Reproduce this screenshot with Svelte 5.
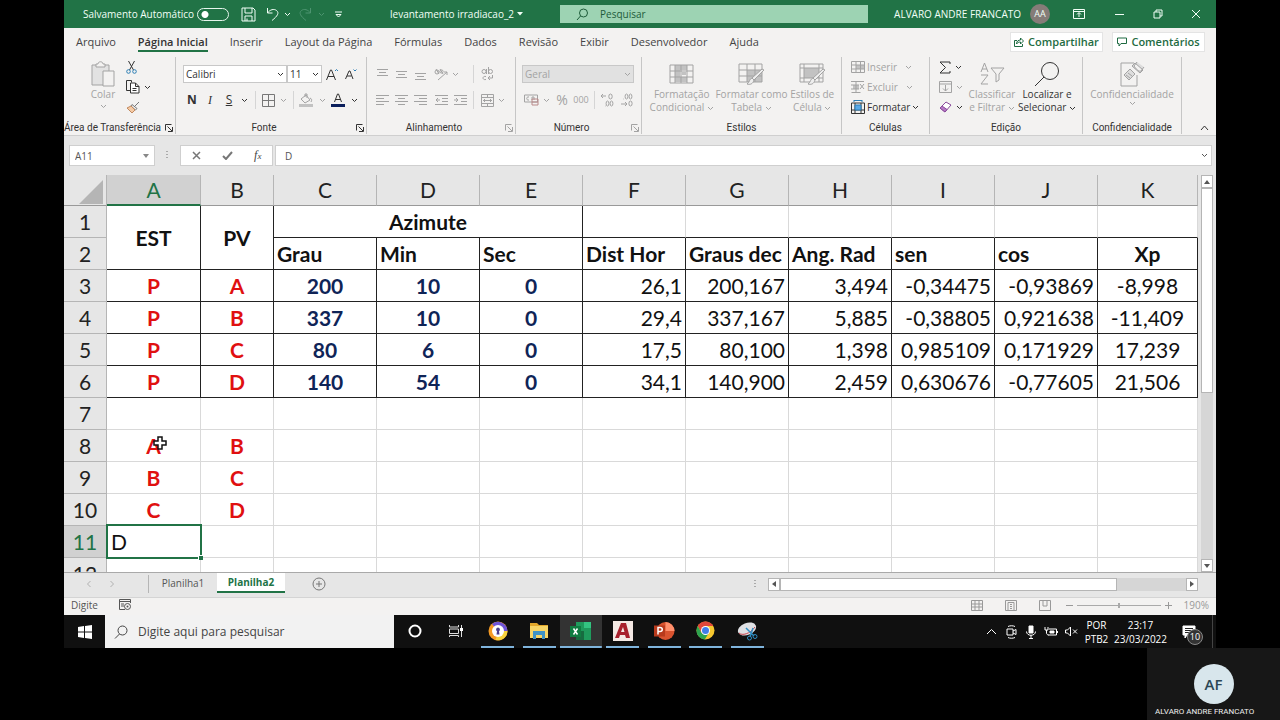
<script>
  const tabs = ['Arquivo', 'Página Inicial', 'Inserir', 'Layout da Página', 'Fórmulas', 'Dados', 'Revisão', 'Exibir', 'Desenvolvedor', 'Ajuda'];
  const columns = ['A', 'B', 'C', 'D', 'E', 'F', 'G', 'H', 'I', 'J', 'K'];
  const points = [
    ['P', 'A', '200', '10', '0', '26,1', '200,167', '3,494', '-0,34475', '-0,93869', '-8,998'],
    ['P', 'B', '337', '10', '0', '29,4', '337,167', '5,885', '-0,38805', '0,921638', '-11,409'],
    ['P', 'C', '80', '6', '0', '17,5', '80,100', '1,398', '0,985109', '0,171929', '17,239'],
    ['P', 'D', '140', '54', '0', '34,1', '140,900', '2,459', '0,630676', '-0,77605', '21,506']
  ];
  const lower = [
    [7, '', ''],
    [8, 'A', 'B'],
    [9, 'B', 'C'],
    [10, 'C', 'D']
  ];
  const rest = Array(9).fill('');
  const kind = (i) => (i < 2 ? 'red' : i < 5 ? 'navy' : i < 10 ? 'num' : 'mid');
  let entry = $state('D');
  let zoom = $state(50);
</script>

{#snippet caret()}
  <svg class="caret" width="7" height="5" viewBox="0 0 7 5" aria-hidden="true"><path d="M1 1l2.5 2.5L6 1" /></svg>
{/snippet}
{#snippet launcher()}
  <button class="launch" aria-label="Mais opções"><svg width="8" height="8" viewBox="0 0 8 8"><path d="M.5 6.500V.5h6M2.500 2.500l4.500 4.500M7.500 3v4.500H3" /></svg></button>
{/snippet}

<div class="page">
  <div class="window">
    <header class="title">
      <div class="quick">
        <label class="auto">Salvamento Automático <input type="checkbox" class="toggle" /></label>
        <button aria-label="Salvar"><svg width="15" height="15" viewBox="0 0 15 15"><path d="M1 1h11l2 2v11H1zM4 1v5h7V1M4 14V9h7v5M6 11.500v2.500" /></svg></button>
        <button aria-label="Desfazer"><svg width="14" height="14" viewBox="0 0 14 14"><path d="M1.500 1v5h5M1.500 6C4 2.500 8 1.500 10.500 3.500c3 2.500 1 5.500-4.500 10" /></svg></button>
        <button aria-label="Opções de desfazer">{@render caret()}</button>
        <button class="faint" aria-label="Refazer"><svg width="14" height="14" viewBox="0 0 14 14"><path d="M12.500 1v5h-5M12.500 6C10 2.500 6 1.500 3.500 3.500c-3 2.500-1 5.500 4.500 10" /></svg></button>
        <button class="faint" aria-label="Opções de refazer">{@render caret()}</button>
        <button aria-label="Personalizar"><svg width="7" height="7" viewBox="0 0 7 7"><path d="M0 1h7M1 3.500l2.500 2.500L6 3.500z" /></svg></button>
      </div>
      <button class="doc">levantamento irradiacao_2 <svg width="6" height="4" viewBox="0 0 6 4"><path class="solid" d="M0 0h6L3 3.500z" /></svg></button>
      <label class="find">
        <svg width="13" height="13" viewBox="0 0 13 13"><circle cx="7.500" cy="5" r="4" /><path d="M4.500 8L1 12" /></svg>
        <input placeholder="Pesquisar" aria-label="Pesquisar" />
      </label>
      <div class="account">
        <span>ALVARO ANDRE FRANCATO</span><span class="initials">AA</span>
        <button aria-label="Opções da faixa"><svg width="12" height="10" viewBox="0 0 12 10"><path d="M.5.5h11v9H.5zM.5 2.500h11M6 8V4M4 5.500l2-2 2 2" /></svg></button>
        <button aria-label="Minimizar"><svg width="9" height="9" viewBox="0 0 9 9"><path d="M0 4.500h9" /></svg></button>
        <button aria-label="Restaurar"><svg width="10" height="10" viewBox="0 0 10 10"><path d="M1 3h6v6H1zM3 3V1h6v6H7" /></svg></button>
        <button aria-label="Fechar"><svg width="10" height="10" viewBox="0 0 10 10"><path d="M1 1l8 8M9 1L1 9" /></svg></button>
      </div>
    </header>

    <nav class="tabs">
      {#each tabs as tab, i}<button class:current={i === 1}>{tab}</button>{/each}
      <div class="share">
        <button><svg width="10" height="10" viewBox="0 0 10 10"><path d="M3 3.500H.5v6h8V7M2.500 7c0-3 2-4 4-4V1l3 3-3 3V5c-2 0-3 .5-4 2z" /></svg>Compartilhar</button>
        <button><svg width="10" height="10" viewBox="0 0 10 10"><path d="M.5 1h9v5.500H4L2 9V6.500H.5z" /></svg>Comentários</button>
      </div>
    </nav>

    <section class="ribbon">
      <div class="group">
        <div class="body clip">
          <button class="big off">
            <svg width="24" height="26" viewBox="0 0 24 26"><path fill="#e2e2e2" d="M1 4h17v20H1z" /><path fill="#f3f2f1" d="M5 6V3h2c0-3 5-3 5 0h2v3zM12 10h11v15H12z" /></svg>
            <span>Colar</span>{@render caret()}
          </button>
          <div class="stack">
            <button aria-label="Recortar"><svg width="11" height="13" viewBox="0 0 11 13"><path d="M2.500 0l5 9M8.500 0l-5 9" /><g stroke="#2d7fb5"><circle cx="2.500" cy="10.500" r="1.800" /><circle cx="8.500" cy="10.500" r="1.800" /></g></svg></button>
            <button aria-label="Copiar"><svg width="14" height="14" viewBox="0 0 14 14"><path d="M4 10.500H.5v-10h5v2" /><path fill="#fff" d="M4.500 3h5L13 6.500V13H4.500zM9.500 3v3.500H13M6.500 8.500h4M6.500 10.500h4" /></svg>{@render caret()}</button>
            <button aria-label="Pincel de Formatação"><svg width="14" height="13" viewBox="0 0 14 13"><path stroke="#777" d="M13 1L9 5M6 3.500l5 4-1.500 1.500L5 5z" /><path fill="#f4cba6" stroke="#c28a60" d="M5 5L1 7l5 5 3-3z" /></svg></button>
          </div>
        </div>
        <footer class="has-launch">Área de Transferência{@render launcher()}</footer>
      </div>

      <div class="group">
        <div class="body two font-body">
          <div class="fonts">
            <span class="sel"><select aria-label="Fonte"><option>Calibri</option></select>{@render caret()}</span>
            <span class="sel"><select aria-label="Tamanho da fonte"><option>11</option></select>{@render caret()}</span>
            <button aria-label="Aumentar fonte"><svg width="13" height="13" viewBox="0 0 13 13"><path d="M.5 12L4.500 2h1l4 10M2 8.500h6" /><path stroke="#2d7fb5" d="M9 3l1.500-1.500L12 3" /></svg></button>
            <button aria-label="Diminuir fonte"><svg width="12" height="12" viewBox="0 0 12 12"><path d="M.5 11L4 3h1l3 8M2 8h4.500" /><path stroke="#2d7fb5" d="M8.500 1.500L10 3l1.500-1.500" /></svg></button>
          </div>
          <div class="style-row">
            <button class="letter"><b>N</b></button><button class="letter serif"><i>I</i></button><button class="letter"><u>S</u></button><button aria-label="Opções de sublinhado">{@render caret()}</button><hr />
            <button aria-label="Bordas"><svg width="13" height="13" viewBox="0 0 13 13"><path stroke="#777" d="M.5.5h12v12H.5zM6.500.5v12M.5 6.500h12" /></svg></button><button class="off" aria-label="Opções de bordas">{@render caret()}</button><hr />
            <button class="off" aria-label="Preenchimento"><svg width="14" height="14" viewBox="0 0 14 14"><path d="M2 6l5-4 4 5-5 3zM6 4V1h2v4M11 5c2 1 2 2 1 4" /><path class="block" d="M0 11h14v3H0z" /></svg></button><button class="off" aria-label="Opções de preenchimento">{@render caret()}</button>
            <button aria-label="Cor da fonte"><svg width="14" height="14" viewBox="0 0 14 14"><path d="M3.500 9L6.500 1h1l3 8M4.500 6.500h5" /><path fill="#0b1f5c" stroke="none" d="M0 11h14v3H0z" /></svg></button><button aria-label="Opções de cor">{@render caret()}</button>
          </div>
        </div>
        <footer class="has-launch">Fonte{@render launcher()}</footer>
      </div>

      <div class="group">
        <div class="body two off">
          <div class="align-row">
            <button aria-label="Alinhar em cima"><svg width="13" height="14" viewBox="0 0 13 14"><path d="M1 2.500h11M3 5.500h7M1 8.500h11" /></svg></button>
            <button aria-label="Alinhar no meio"><svg width="13" height="14" viewBox="0 0 13 14"><path d="M1 4.500h11M3 7.500h7M1 10.500h11" /></svg></button>
            <button aria-label="Alinhar embaixo"><svg width="13" height="14" viewBox="0 0 13 14"><path d="M1 6.500h11M3 9.500h7M1 12.500h11" /></svg></button>
            <button aria-label="Orientação"><svg width="14" height="13" viewBox="0 0 14 13"><path d="M4 12L13 4M10 4h3v3" /><circle cx="3" cy="4" r="2" /><path d="M5 6L2 1M6 1l3 5" /><circle cx="7.500" cy="3.500" r="1.600" /></svg></button>
            <button class="near" aria-label="Opções de orientação">{@render caret()}</button><hr />
            <button aria-label="Quebrar texto"><svg width="13" height="14" viewBox="0 0 13 14"><circle cx="3" cy="4.500" r="2" /><path d="M5.500 2v5M7.500 0v7M5 9.500c-4-1-4 4 0 3M11.500 8v3H7M9 9l-2 2 2 2" /><circle cx="9.500" cy="4.500" r="2" /></svg></button>
          </div>
          <div class="align-row">
            <button aria-label="À esquerda"><svg width="13" height="13" viewBox="0 0 13 13"><path d="M0 1.500h13M0 4.500h8M0 7.500h13M0 10.500h8" /></svg></button>
            <button aria-label="Centralizar"><svg width="13" height="13" viewBox="0 0 13 13"><path d="M0 1.500h13M3 4.500h7M0 7.500h13M3 10.500h7" /></svg></button>
            <button aria-label="À direita"><svg width="13" height="13" viewBox="0 0 13 13"><path d="M0 1.500h13M5 4.500h8M0 7.500h13M5 10.500h8" /></svg></button>
            <button aria-label="Diminuir recuo"><svg width="13" height="13" viewBox="0 0 13 13"><path d="M0 1.500h13M7 4.500h6M7 7.500h6M0 10.500h13M5 6H1M3 4L1 6l2 2" /></svg></button>
            <button aria-label="Aumentar recuo"><svg width="13" height="13" viewBox="0 0 13 13"><path d="M0 1.500h13M7 4.500h6M7 7.500h6M0 10.500h13M0 6h4M2 4l2 2-2 2" /></svg></button><hr />
            <button aria-label="Mesclar"><svg width="13" height="13" viewBox="0 0 13 13"><path d="M.5.5h12v12H.5zM.5 3.500h12M.5 9.500h12M6.500 0v3.500M6.500 9.500V13M2 6.500h9M4 5L2.500 6.500 4 8M9 5l1.500 1.500L9 8" /></svg></button>
            <button aria-label="Opções de mesclagem">{@render caret()}</button>
          </div>
        </div>
        <footer class="has-launch">Alinhamento<span class="off">{@render launcher()}</span></footer>
      </div>

      <div class="group">
        <div class="body two off">
          <div class="format"><span class="sel"><select aria-label="Formato de número" disabled><option>Geral</option></select>{@render caret()}</span></div>
          <div class="number-row">
            <button aria-label="Moeda"><svg width="15" height="12" viewBox="0 0 15 12"><path d="M.5 1h13v7H.5z" /><path d="M5 3c-3-1-3 4 0 3M8 6V3h2v3" /><path stroke="#b98a8a" d="M8 5h6v6H8zM8 8h6" /></svg></button>
            <button aria-label="Opções de moeda">{@render caret()}</button>
            <button class="pct">%</button><button class="thousand">000</button><hr />
            <button aria-label="Aumentar casas"><svg width="14" height="14" viewBox="0 0 14 14"><path d="M1 3h5M3 1L1 3l2 2M5 13h.5" /><ellipse cx="10.500" cy="3.500" rx="1.700" ry="2.500" /><ellipse cx="7.500" cy="10.500" rx="1.400" ry="2.500" /><ellipse cx="11.500" cy="10.500" rx="1.400" ry="2.500" /></svg></button>
            <button aria-label="Diminuir casas"><svg width="14" height="14" viewBox="0 0 14 14"><path d="M1 11h6M5 9l2 2-2 2M3 6h.5" /><ellipse cx="6.500" cy="3.500" rx="1.400" ry="2.500" /><ellipse cx="10.500" cy="3.500" rx="1.400" ry="2.500" /><ellipse cx="10.500" cy="10.500" rx="1.600" ry="2.500" /></svg></button>
          </div>
        </div>
        <footer class="has-launch">Número<span class="off">{@render launcher()}</span></footer>
      </div>

      <div class="group">
        <div class="body styles off">
          <button class="big"><svg width="25" height="22" viewBox="0 0 25 22"><path class="block" d="M6 2h12v5H6zM6 7h5v7H6zM6 14h12v5H6zM13 9h4v3h-4z" /><path d="M1 2h23v18H1zM1 8h23M1 14h23M6 2v18M12 2v18M18 2v18" /></svg><span>Formatação<br />Condicional {@render caret()}</span></button>
          <button class="big"><svg width="27" height="24" viewBox="0 0 27 24"><path class="block" d="M9 8h15v12H9z" /><path d="M1 2h23v18H1zM1 8h23M1 14h23M9 2v18M17 2v18" /><path fill="#eee" d="M26 8L16 18l-2-2L24 7zM16 18c-1 4-4 5-7 4 3-2 2-5 5-6z" /></svg><span>Formatar como<br />Tabela {@render caret()}</span></button>
          <button class="big"><svg width="27" height="24" viewBox="0 0 27 24"><path class="block" d="M5 6h15v10H5z" /><path d="M1 2h23v18H1zM1 6h23M1 16h23M5 2v18M20 2v18" /><path fill="#eee" d="M26 8L16 18l-2-2L24 7zM16 18c-1 4-4 5-7 4 3-2 2-5 5-6z" /></svg><span>Estilos de<br />Célula {@render caret()}</span></button>
        </div>
        <footer>Estilos</footer>
      </div>

      <div class="group">
        <div class="body cells">
          <button class="off"><svg width="14" height="12" viewBox="0 0 14 12"><path class="block" d="M5 4h8v4H5z" /><path d="M.5.5h13v11H.5zM5 0v12M9.500 0v12M0 4h14M0 8h14" /></svg>Inserir <i></i>{@render caret()}</button>
          <button class="off"><svg width="14" height="12" viewBox="0 0 14 12"><path class="block" d="M2 4h6v4H2z" /><path d="M.5 11.500h9M0 .5h13M0 4h8M0 8h8M5 0v12M9 3l4 5M13 3L9 8" /></svg>Excluir <i></i>{@render caret()}</button>
          <button><svg width="14" height="14" viewBox="0 0 14 14"><path d="M.5 3h13v10.500H.5zM4 3v10.500M10 3v10.500M0 10h14" /><path fill="#58a9e8" stroke="#2d7fb5" d="M4 5h6v5H4zM3 .5h8M3 0v2M11 0v2" /></svg>Formatar{@render caret()}</button>
        </div>
        <footer>Células</footer>
      </div>

      <div class="group">
        <div class="body edit">
          <div class="stack">
            <button aria-label="AutoSoma"><svg width="12" height="13" viewBox="0 0 12 13"><path d="M11 3V1H1l5.500 5.500L1 12h10v-2" /></svg>{@render caret()}</button>
            <button class="off" aria-label="Preencher"><svg width="13" height="12" viewBox="0 0 13 12"><path d="M.5.5h12v11H.5zM.5 3h12M6.500 4v6M4 7.500L6.500 10 9 7.500" /></svg>{@render caret()}</button>
            <button aria-label="Limpar"><svg width="13" height="12" viewBox="0 0 13 12"><path fill="#fff" stroke="#8a4a9c" d="M1 7l6-6 5 3-6 7z" /><path fill="#b579c4" stroke="#8a4a9c" d="M1 7l2-2 5 3.500L6 11z" /></svg>{@render caret()}</button>
          </div>
          <button class="big off"><svg width="25" height="26" viewBox="0 0 25 26"><path d="M1 11L4.500 2 8 11M2 8h5M1 14h7l-7 9h7M11 7h13l-5 6v6l-3 2v-8z" /></svg><span>Classificar<br />e Filtrar {@render caret()}</span></button>
          <button class="big"><svg width="26" height="26" viewBox="0 0 26 26"><circle cx="16" cy="10" r="8.500" /><path d="M10 16l-9 9" /></svg><span>Localizar e<br />Selecionar {@render caret()}</span></button>
        </div>
        <footer>Edição</footer>
      </div>

      <div class="group">
        <div class="body conf off">
          <button class="big"><svg width="25" height="26" viewBox="0 0 25 26"><path d="M17 14v11H1V2h13" /><path fill="#ddd" d="M4 14l6-6 5 5-6 6zM6 14l4 3M8 12l4 3M12 5l3-3 8 7-3 3zM17 1l-3 4c2 3 5 6 7 5l3-4" /></svg><span>Confidencialidade</span>{@render caret()}</button>
        </div>
        <footer>Confidencialidade</footer>
      </div>
      <button class="fold" aria-label="Recolher faixa"><svg width="9" height="6" viewBox="0 0 9 6"><path d="M1 5l3.500-4L8 5" /></svg></button>
    </section>

    <section class="formula">
      <div class="namebox"><input value="A11" aria-label="Caixa de nome" /><svg width="6" height="4" viewBox="0 0 6 4"><path class="solid" d="M0 0h6L3 4z" /></svg></div>
      <span class="dots"></span>
      <div class="fx">
        <button aria-label="Cancelar"><svg width="9" height="9" viewBox="0 0 9 9"><path stroke-width="1.500" d="M1 1l7 7M8 1L1 8" /></svg></button>
        <button aria-label="Inserir valor"><svg width="11" height="9" viewBox="0 0 11 9"><path stroke-width="2" d="M1 5l3 3 6-7" /></svg></button>
        <button class="func"><i>f<small>x</small></i></button>
      </div>
      <div class="bar"><input bind:value={entry} aria-label="Barra de fórmulas" />{@render caret()}</div>
    </section>

    <main class="grid">
      <div class="cellsview">
        <table>
          <colgroup><col class="w-head" /><col class="w-a" /><col class="w-b" />{#each Array(8) as _}<col class="w-c" />{/each}<col /></colgroup>
          <thead>
            <tr><th class="corner"><svg width="25" height="25" viewBox="0 0 25 25" aria-hidden="true"><path d="M24 0v24H0z" /></svg></th>{#each columns as c, i}<th class:picked={i === 0}>{c}</th>{/each}</tr>
          </thead>
          <tbody>
            <tr class="ink"><th>1</th><td rowspan="2" class="mid bold">EST</td><td rowspan="2" class="mid bold">PV</td><td colspan="3" class="mid bold">Azimute</td>{#each Array(6) as _}<td class="open"></td>{/each}</tr>
            <tr class="ink bold"><th>2</th><td>Grau</td><td>Min</td><td>Sec</td><td>Dist Hor</td><td>Graus dec</td><td>Ang. Rad</td><td>sen</td><td>cos</td><td class="mid">Xp</td></tr>
            {#each points as row, r}
              <tr class="ink"><th>{r + 3}</th>{#each row as v, i}<td class={kind(i)}>{v}</td>{/each}</tr>
            {/each}
            {#each lower as [n, a, b]}
              <tr><th>{n}</th><td class="red">{a}{#if n === 8}<svg class="pointer" width="14" height="14" viewBox="0 0 14 14" aria-hidden="true"><path d="M5 1h4v4h4v4H9v4H5V9H1V5h4z" /></svg>{/if}</td><td class="red">{b}</td>{#each rest as _}<td></td>{/each}</tr>
            {/each}
            <tr><th class="picked">11</th><td class="active"><div class="editor"><input bind:value={entry} aria-label="Célula A11" /><span></span></div></td><td></td>{#each rest as _}<td></td>{/each}</tr>
            <tr><th>12</th><td></td><td></td>{#each rest as _}<td></td>{/each}</tr>
          </tbody>
        </table>
      </div>
      <div class="vscroll">
        <button aria-label="Rolar para cima"><svg width="6" height="4" viewBox="0 0 6 4"><path class="solid" d="M0 4h6L3 0z" /></svg></button>
        <span class="thumb"></span><span class="track"></span>
        <button aria-label="Rolar para baixo"><svg width="6" height="4" viewBox="0 0 6 4"><path class="solid" d="M0 0h6L3 4z" /></svg></button>
      </div>
    </main>

    <nav class="sheets">
      <div class="arrows"><svg width="4" height="6" viewBox="0 0 4 6"><path d="M3.500 0L.5 3l3 3" /></svg><svg width="4" height="6" viewBox="0 0 4 6"><path d="M.5 0l3 3-3 3" /></svg></div>
      <button class="sheet">Planilha1</button><button class="sheet on">Planilha2</button>
      <button class="add" aria-label="Nova planilha"><svg width="14" height="14" viewBox="0 0 14 14"><circle cx="7" cy="7" r="6" /><path d="M7 4v6M4 7h6" /></svg></button>
      <span class="dots"></span>
      <div class="hscroll">
        <button aria-label="Rolar para a esquerda"><svg width="4" height="6" viewBox="0 0 4 6"><path class="solid" d="M4 0v6L0 3z" /></svg></button>
        <span class="thumb"></span><span class="track"></span>
        <button aria-label="Rolar para a direita"><svg width="4" height="6" viewBox="0 0 4 6"><path class="solid" d="M0 0v6l4-3z" /></svg></button>
      </div>
    </nav>

    <footer class="status">
      <span>Digite</span>
      <button aria-label="Gravar macro"><svg width="13" height="12" viewBox="0 0 13 12"><path d="M6 10.500H.5V.5h11V4M.5 2.500h11M2 5h3M2 7h3" /><circle cx="8.500" cy="7.500" r="3" /><circle class="solid" cx="8.500" cy="7.500" r="1" /></svg></button>
      <div class="views">
        <button aria-label="Normal"><svg width="12" height="11" viewBox="0 0 12 11"><path d="M.5.5h11v10H.5zM4 0v11M8 0v11M0 4h12M0 7h12" /></svg></button>
        <button aria-label="Layout da página"><svg width="12" height="11" viewBox="0 0 12 11"><path d="M.5.5h11v10H.5zM3 2.500h6v8H3zM5 4.500h2M5 6.500h2M5 8.500h2" /></svg></button>
        <button aria-label="Quebra de página"><svg width="12" height="11" viewBox="0 0 12 11"><path d="M.5.5h11v10H.5zM4 0v6h4V0" /></svg></button>
      </div>
      <div class="zoom">
        <button aria-label="Menos zoom"><svg width="7" height="7" viewBox="0 0 7 7"><path d="M0 3.500h7" /></svg></button>
        <input type="range" bind:value={zoom} aria-label="Zoom" />
        <button aria-label="Mais zoom"><svg width="7" height="7" viewBox="0 0 7 7"><path d="M0 3.500h7M3.500 0v7" /></svg></button>
        <span>190%</span>
      </div>
    </footer>

    <section class="taskbar">
      <button class="start" aria-label="Iniciar"><svg width="14" height="14" viewBox="0 0 14 14"><path d="M0 2l6-1v5.500H0zM7 1l7-1v6.500H7zM0 7.500h6V13l-6-1zM7 7.500h7V14l-7-1z" /></svg></button>
      <label class="tasksearch"><svg width="14" height="14" viewBox="0 0 14 14"><circle cx="8.500" cy="5.500" r="4.500" /><path d="M5.500 9L1 13.500" /></svg><input placeholder="Digite aqui para pesquisar" aria-label="Pesquisar no computador" /></label>
      <div class="apps">
        <button aria-label="Cortana"><svg width="14" height="14" viewBox="0 0 14 14"><circle cx="7" cy="7" r="5.500" fill="none" stroke="#fff" stroke-width="2" /></svg></button>
        <button aria-label="Visão de tarefas"><svg width="14" height="14" viewBox="0 0 14 14"><path fill="none" stroke="#ddd" d="M.5 1v2h9V1M.5 5h9v4.500h-9zM.5 13v-1.500h9V13M12.500 1v12" /><path fill="#fff" d="M11 4h3v3h-3z" /></svg></button>
        <button class="run" aria-label="Navegador seguro"><svg width="20" height="20" viewBox="0 0 20 20"><circle cx="10" cy="10" r="9.500" fill="#f59a23" /><path fill="#6f54d8" d="M4 3a9.500 9.500 0 0 1 15.500 7H10z" /><path fill="#f7d23c" d="M19.500 10a9.500 9.500 0 0 1-12 9l3-9z" /><circle cx="10" cy="10" r="6" fill="#fff" /><path fill="#4a3d8c" d="M10 6.500a2 2 0 0 1 1 3.700l.5 3.300h-3l.5-3.300a2 2 0 0 1 1-3.700z" /></svg></button>
        <button class="run" aria-label="Explorador"><svg width="20" height="18" viewBox="0 0 20 18"><path fill="#e2a72a" d="M1 1h7l2 2h9v4H1z" /><path fill="#f7d566" d="M1 4h18v12H1z" /><path fill="#3f93c6" d="M4 9h12v8h-3v-4H7v4H4z" /></svg></button>
        <button class="run focus" aria-label="Excel"><svg width="21" height="18" viewBox="0 0 21 18"><path fill="#1f9a5c" d="M6 0h15v18H6z" /><path fill="#33c481" d="M14 0h7v6h-7z" /><path fill="#176b40" d="M6 9h8v9H6z" /><path fill="#107c41" d="M0 4h11v11H0z" /><path stroke="#fff" stroke-width="1.500" d="M3.500 6.500l4 6M7.500 6.500l-4 6" /></svg></button>
        <button class="run" aria-label="AutoCAD"><svg width="20" height="20" viewBox="0 0 20 20"><path fill="#f4e9e4" d="M0 0h20v20H0z" /><path fill="#a8202c" d="M2 17L8 2h5l4 15h-4l-1-3H7l-1 3zM8 11h3.500L10 6z" /></svg></button>
        <button class="run" aria-label="PowerPoint"><svg width="21" height="20" viewBox="0 0 21 20"><circle cx="11.500" cy="10" r="9" fill="#d9532f" /><path fill="#ff8f6b" d="M11.500 1a9 9 0 0 1 9 9h-9z" /><path fill="#b83a1c" d="M0 4.500h11v11H0z" /><path fill="none" stroke="#fff" stroke-width="1.500" d="M4 13.500v-7h2c3 0 3 4 0 4H4" /></svg></button>
        <button class="run" aria-label="Chrome"><svg width="19" height="19" viewBox="0 0 19 19"><circle cx="9.500" cy="9.500" r="9" fill="#f7c72e" /><path fill="#e0463a" d="M1.700 5a9 9 0 0 1 15.600 0H9.500L5.600 12z" /><path fill="#2da44f" d="M1.700 5a9 9 0 0 0 7 13.500l4.500-7-7.600.5z" /><circle cx="9.500" cy="9.500" r="4.500" fill="#fff" /><circle cx="9.500" cy="9.500" r="3.500" fill="#3f7de8" /></svg></button>
        <button class="run" aria-label="Captura"><svg width="21" height="20" viewBox="0 0 21 20"><ellipse cx="10" cy="8" rx="9.500" ry="6" fill="#dfe0e4" transform="rotate(-22 10 8)" /><path stroke="#c8414a" fill="none" d="M2 12c3 3 11 1 16-6" /><path stroke="#2f8ec4" stroke-width="1.500" fill="none" d="M9 7l8 8M16 7l-3 9" /><circle cx="12.500" cy="17" r="2" fill="none" stroke="#2f8ec4" /><circle cx="18" cy="15.500" r="2" fill="none" stroke="#2f8ec4" /></svg></button>
      </div>
      <div class="tray">
        <button aria-label="Ícones ocultos"><svg width="11" height="7" viewBox="0 0 11 7"><path d="M1 6l4.500-4.500L10 6" /></svg></button>
        <button aria-label="Reunião"><svg width="11" height="14" viewBox="0 0 11 14"><path d="M1 4h6v6H1zM7 6l3-1.500v5L7 8M2 1.500c2-1 5-1 7 0M2 12.500c2 1 5 1 7 0" /></svg></button>
        <button aria-label="Microfone"><svg width="10" height="14" viewBox="0 0 10 14"><path fill="#fff" d="M3 1h4v7H3z" /><path d="M.5 6.500c0 5 9 5 9 0M5 10v3M3 13.500h4" /></svg></button>
        <button aria-label="Bateria"><svg width="14" height="11" viewBox="0 0 14 11"><path d="M5 3h7.500v6H4M13.500 5v2M1 1v3h3V1M2.500 4v3c0 1 1 2 2 2" /><path fill="#fff" d="M6 5h4v2H6z" /></svg></button>
        <button aria-label="Som"><svg width="13" height="11" viewBox="0 0 13 11"><path d="M.5 4h2l3-3v9l-3-3h-2zM8 3.500l4 4M12 3.500l-4 4" /></svg></button>
        <button class="lang">POR<br />PTB2</button>
        <button class="clock">23:17<br />23/03/2022</button>
        <button class="notes" aria-label="Notificações"><svg width="15" height="14" viewBox="0 0 15 14"><path fill="#fff" d="M1 1h12v9H5l-2 3v-3H1z" /><path stroke="#222" d="M3 3.500h8M3 5.500h8M3 7.500h6" /></svg><span>10</span></button>
      </div>
    </section>
  </div>

  <aside class="call">
    <div class="person"><span class="face">AF</span><span class="who">ALVARO ANDRE FRANCATO</span></div>
  </aside>
</div>

<style>
  :global(body) { background: #000; }
  :global(*) { box-sizing: border-box; }
  .page { min-height: 100vh; display: flex; flex-direction: column; font: 10px/12px "Open Sans", sans-serif; color: #333; }
  .window { flex: 1; display: flex; flex-direction: column; margin: 0 64px; background: #e6e6e6; }
  button { display: flex; align-items: center; justify-content: center; padding: 0; border: 0; background: none; color: inherit; font: inherit; white-space: nowrap; }
  input, select { min-width: 0; padding: 0; border: 0; border-radius: 0; outline: 0; background: none; color: inherit; font: inherit; }
  hr { width: 1px; height: 18px; margin: 0; border: 0; background: #d5d5d5; }
  svg { flex: none; fill: none; stroke: currentColor; }
  .solid { fill: currentColor; stroke: none; }
  .block { fill: #c2c2c2; stroke: none; }
  .off { color: #a3a3a3; }

  .title { display: flex; align-items: center; height: 28px; background: #217346; color: #f2fff7; }
  .quick { display: grid; grid-template-columns: 169px 30px 20px 9px 26px 6px 28px; align-items: center; justify-items: center; width: 326px; }
  .quick .faint { color: #4d9470; }
  .auto { display: flex; align-items: center; justify-content: space-between; justify-self: stretch; padding: 0 4px 0 19px; white-space: nowrap; }
  .toggle { appearance: none; width: 32px; height: 13px; margin: 0; border: 1px solid #e6f5ec; border-radius: 7px; background: radial-gradient(circle at 7px 50%, #fff 3px, transparent 4px); }
  .doc { width: 170px; gap: 3px; justify-content: flex-start; }
  .find { flex: 1; display: flex; align-items: center; gap: 11px; height: 18px; padding-left: 16px; background: #9dd3b3; color: #1d5c3a; }
  .find input { flex: 1; }
  input::placeholder { color: inherit; opacity: 1; }
  .account { display: grid; grid-template-columns: 153px 38px 40px 40px 37px 40px; align-items: center; justify-items: center; width: 348px; }
  .account span:first-child { justify-self: end; }
  .initials { width: 20px; border-radius: 50%; background: #857c78; text-align: center; font-size: 9px; line-height: 20px; }

  .tabs { display: flex; align-items: center; gap: 22px; height: 28px; padding: 0 11px 0 12px; background: #f3f2f1; color: #444; font-size: 11px; }
  .tabs > button { height: 20px; border: solid transparent; border-width: 2px 0; }
  .tabs > .current { border-bottom-color: #217346; color: #333; font-weight: 600; }
  .share { display: flex; gap: 9px; margin-left: auto; }
  .share button { gap: 4px; width: 93px; height: 20px; border: 1px solid #e4e4e4; background: #fff; color: #1e6b42; font-weight: 600; }

  .ribbon { display: grid; grid-template-columns: 112px 191px 149px 126px 200px 88px 153px 99px 1fr; height: 80px; padding: 1px 0; border-bottom: 1px solid #cfcfcf; background: #f3f2f1; }
  .group { display: flex; flex-direction: column; border-right: 1px solid #c6c6c6; }
  .body { flex: 1; display: flex; }
  .group footer { position: relative; display: flex; justify-content: center; font-family: Roboto, sans-serif; line-height: 12px; white-space: nowrap; color: #333; }
  .group .has-launch { padding-right: 14px; }
  .launch { position: absolute; right: 2px; top: 2px; }
  .big { flex-direction: column; justify-content: flex-start; padding-top: 3px; line-height: 13px; }
  .big > svg:first-child { height: 28px; }
  .two { flex-direction: column; gap: 6px; padding: 7px 0 0 6px; }
  .two.font-body { padding-left: 7px; }
  .two > div { display: grid; align-items: center; justify-items: center; height: 20px; }
  .stack { display: grid; grid-template-rows: repeat(3, 20px); justify-items: start; }
  .cells i { width: 4px; }
  .stack button { gap: 4px; }
  .clip { gap: 6px; padding-left: 22px; }
  .clip .big { width: 34px; }
  .clip .big span { padding-bottom: 3px; }
  .sel { position: relative; display: flex; width: 100%; height: 18px; border: 1px solid #c8c8c8; background: #fff; }
  .sel select { width: 100%; padding-left: 2px; appearance: none; opacity: 1; }
  .sel .caret { position: absolute; right: 2px; top: 6px; }
  .two .fonts { grid-template-columns: 104px 35px 20px 17px; }
  .two .style-row { grid-template-columns: 18px 18px 20px 10px 12px 14px 16px 4px 22px 10px 22px 10px; }
  .letter { font-size: 12px; }
  .serif { font-family: "Liberation Serif", serif; }
  .two .align-row { grid-template-columns: 19px 19px 19px 22px 16px 10px 18px 10px; }
  .near { justify-self: start; }
  .two .format { grid-template-columns: 112px; }
  .format .sel { background: #e1e1e1; }
  .two .number-row { grid-template-columns: 18px 12px 20px 18px 8px 18px 22px; }
  .pct { font-size: 14px; }
  .thousand { font-size: 9px; }
  .styles { padding-left: 2px; }
  .styles .big { width: 76px; }
  .styles .big:nth-child(2) { width: 64px; }
  .styles .big:nth-child(3) { width: 58px; }
  .cells { display: grid; grid-template-rows: repeat(3, 20px); justify-items: start; padding-left: 9px; }
  .cells button { gap: 2px; }
  .edit { padding-left: 9px; }
  .edit .stack { width: 28px; }
  .edit .big { width: 50px; }
  .edit .big:last-child { width: 60px; }
  .conf { justify-content: center; }
  .fold { align-self: end; justify-self: end; padding: 0 7px 3px 0; }

  .formula { display: flex; height: 39px; padding: 9px 4px 9px 5px; color: #555; }
  .namebox, .fx, .bar { display: flex; align-items: center; border: 1px solid #cfcfcf; background: #fff; }
  .namebox { width: 86px; padding: 0 5px; }
  .namebox input { flex: 1; }
  .namebox svg { color: #888; }
  .dots { width: 2px; height: 9px; align-self: center; background: repeating-linear-gradient(#aaa 0 1px, transparent 1px 3px); }
  .formula .dots { margin: 0 12px 0 11px; }
  .fx { width: 93px; margin-right: 2px; justify-content: space-around; color: #777; }
  .func { font: 12px/16px "Liberation Serif", serif; color: #444; }
  .func small { font-size: 9px; }
  .bar { flex: 1; padding: 0 3px 0 9px; }
  .bar input { flex: 1; }

  .grid { flex: 1 1 0; display: flex; gap: 3px; min-height: 0; padding-right: 3px; border-bottom: 1px solid #a9a9a9; overflow: hidden; }
  .cellsview { flex: 1; height: 0; min-height: 100%; overflow: hidden; }
  table { width: 100%; table-layout: fixed; border-spacing: 0; background: #fff; color: #111; font: 21px/26px Lato, sans-serif; }
  .w-head { width: 43px; }
  .w-a { width: 94px; }
  .w-b { width: 73px; }
  .w-c { width: 103px; }
  td, th { height: 32px; padding: 0 3px; border: solid #d9d9d9; border-width: 0 1px 1px 0; text-align: left; white-space: nowrap; }
  th { padding: 0; border-color: #b5b5b5; background: #e6e6e6; color: #222; font-weight: 400; text-align: center; }
  thead th { height: 31px; border-bottom-color: #999; }
  .corner svg { display: block; margin: 4px 0 0 15px; fill: #b5b5b5; stroke: none; }
  th.picked { background: #d1d1d1; color: #217346; }
  thead .picked { border-bottom: 2px solid #217346; }
  .ink td { border-color: #222; }
  .ink .open { border-right-color: #d9d9d9; }
  .bold td, .bold { font-weight: 700; }
  .mid { text-align: center; }
  .num { text-align: right; }
  .red, .navy { position: relative; text-align: center; font-weight: 700; color: #e01010; }
  .navy { color: #0f2457; }
  .pointer { position: absolute; left: 46px; top: 6px; fill: #fff; stroke: #111; stroke-width: 1.500; }
  .active { position: relative; }
  .editor { position: absolute; inset: -2px -2px -2px -1px; display: flex; border: 2px solid #217346; background: #fff; }
  .editor input { width: 100%; padding-left: 3px; }
  .editor span { position: absolute; right: -3px; bottom: -3px; width: 5px; height: 5px; border: solid #fff; border-width: 1px 0 0 1px; background: #217346; }
  .vscroll { display: flex; flex-direction: column; width: 12px; }
  .vscroll button, .hscroll button { flex: none; width: 12px; height: 13px; border: 1px solid #b5b5b5; background: #fff; color: #555; }
  .thumb { border: 1px solid #b5b5b5; background: #fff; }
  .track { background: #d6d6d6; }
  .vscroll .thumb { flex: 55; }
  .vscroll .track { flex: 45; }

  .sheets { display: flex; align-items: center; height: 24px; padding: 0 18px 2px 0; color: #555; }
  .arrows { display: flex; align-items: center; gap: 19px; width: 85px; height: 18px; padding-left: 23px; border-right: 1px solid #b5b5b5; color: #b0b0b0; }
  .sheet { width: 68px; height: 20px; align-self: flex-start; }
  .sheet.on { border-bottom: 2px solid #217346; background: #fff; color: #217346; font-weight: 700; }
  .add { margin-left: 27px; margin-right: auto; color: #777; }
  .hscroll { display: flex; width: 430px; height: 13px; margin-left: 12px; }
  .hscroll .thumb { flex: 83; }
  .hscroll .track { flex: 17; }

  .status { display: flex; align-items: center; gap: 21px; height: 18px; padding: 0 7px 3px 7px; border-top: 1px solid #d4d4d4; background: #f3f2f1; color: #555; }
  .views { display: flex; gap: 22px; margin-left: auto; color: #999; }
  .zoom { display: flex; align-items: center; gap: 4px; color: #999; margin-left: -6px; }
  .zoom span { margin-left: 8px; }
  .zoom input { appearance: none; width: 84px; height: 10px; margin: 0; background: linear-gradient(#aaa, #aaa) center / 100% 1px no-repeat; }
  .zoom input::-webkit-slider-thumb { appearance: none; width: 2px; height: 5px; background: #aaa; }

  .taskbar { display: flex; height: 33px; background: #101010; color: #fff; }
  .start { width: 41px; }
  .start svg { fill: #fff; stroke: none; }
  .tasksearch { display: flex; align-items: center; gap: 10px; width: 289px; padding-left: 9px; background: #f2f2f2; color: #444; font-size: 12px; }
  .tasksearch input { flex: 1; }
  .apps { display: grid; grid-template-columns: repeat(9, 1fr); width: 374px; }
  .apps button { padding-bottom: 2px; }
  .apps svg { stroke: none; }
  .run { background: linear-gradient(#7fb4dc, #7fb4dc) center bottom / 33px 2px no-repeat; }
  .focus { background-color: #333; background-size: 100% 2px; }
  .tray { display: grid; grid-template-columns: repeat(5, 20px) 31px 57px 40px; align-items: stretch; justify-content: end; margin-left: auto; padding-right: 3px; border-right: 1px solid #444; margin-right: 3px; line-height: 14px; }
  .notes { position: relative; }
  .notes span { position: absolute; left: 18px; top: 14px; width: 16px; border: 1px solid #888; border-radius: 50%; background: #333; font-size: 9px; line-height: 14px; }

  .call { display: flex; justify-content: flex-end; height: 72px; }
  .person { display: flex; flex-direction: column; align-items: center; gap: 2px; width: 133px; padding-top: 16px; background: #171717; color: #eee; }
  .who { align-self: flex-start; padding-left: 8px; font: 8px/12px Roboto, sans-serif; white-space: nowrap; }
  .face { width: 40px; border-radius: 50%; background: #d8e6ec; color: #2c4654; text-align: center; font-size: 15px; font-weight: 600; line-height: 40px; }
</style>
